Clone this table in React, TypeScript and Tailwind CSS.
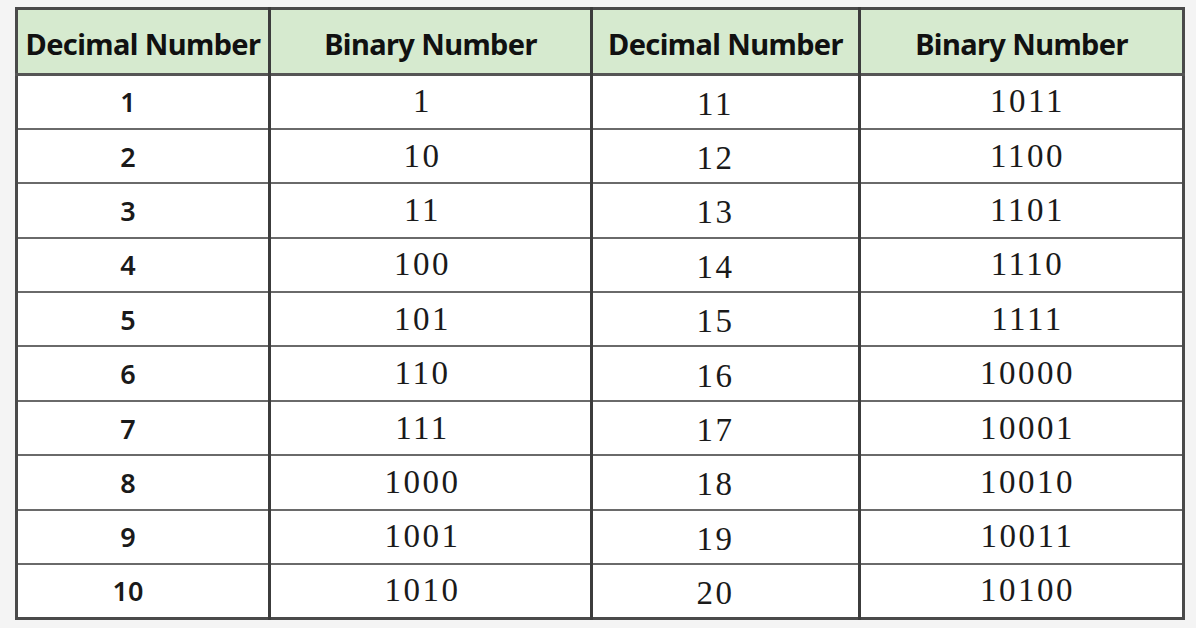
const rows: [string, string, string, string][] = [
  ["1", "1", "11", "1011"],
  ["2", "10", "12", "1100"],
  ["3", "11", "13", "1101"],
  ["4", "100", "14", "1110"],
  ["5", "101", "15", "1111"],
  ["6", "110", "16", "10000"],
  ["7", "111", "17", "10001"],
  ["8", "1000", "18", "10010"],
  ["9", "1001", "19", "10011"],
  ["10", "1010", "20", "10100"],
];

const head = "font-['Noto_Sans',sans-serif] font-bold text-[29px] leading-none tracking-[-0.6px] text-[#111] text-center p-0 pt-[4px]";
const serif = "font-['Liberation_Serif',serif] text-[33px] leading-none tracking-[2.5px] text-[#1a1a1a] text-center p-0";
const sans = "font-['Noto_Sans',sans-serif] font-semibold text-[27px] leading-none text-[#1a1a1a] text-center p-0";

const App = () => {
  return (
    <div className="w-[1196px] h-[628px] bg-[#f4f4f4] pt-[7px] pl-[15px]">
      <table className="border-collapse bg-white border-[3px] border-[#4a4a4a] table-fixed w-[1167px]">
        <colgroup>
          <col className="w-[253px]" />
          <col className="w-[322px]" />
          <col className="w-[268px]" />
          <col className="w-[324px]" />
        </colgroup>
        <thead>
          <tr className="h-[66px] bg-[#d6eacf] border-b-[3px] border-[#555]">
            <th className={`${head} border-r-[3px] border-[#3c3c3c]`}>Decimal Number</th>
            <th className={`${head} border-r-[3px] border-[#3c3c3c]`}>Binary Number</th>
            <th className={`${head} border-r-[3px] border-[#3c3c3c]`}>Decimal Number</th>
            <th className={head}>Binary Number</th>
          </tr>
        </thead>
        <tbody>
          {rows.map((r, i) => (
            <tr key={i} className="h-[54.4px] border-t-2 border-[#6a6a6a]">
              <td className={`${sans} pr-[30px] border-r-[3px] border-[#3c3c3c]`}>{r[0]}</td>
              <td className={`${serif} pr-[16px] border-r-[3px] border-[#3c3c3c]`}>{r[1]}</td>
              <td className={`${serif} pr-[20px] pt-[5px] border-r-[3px] border-[#3c3c3c]`}>{r[2]}</td>
              <td className={`${serif} pl-[12px]`}>{r[3]}</td>
            </tr>
          ))}
        </tbody>
      </table>
    </div>
  );
};

export default App;
